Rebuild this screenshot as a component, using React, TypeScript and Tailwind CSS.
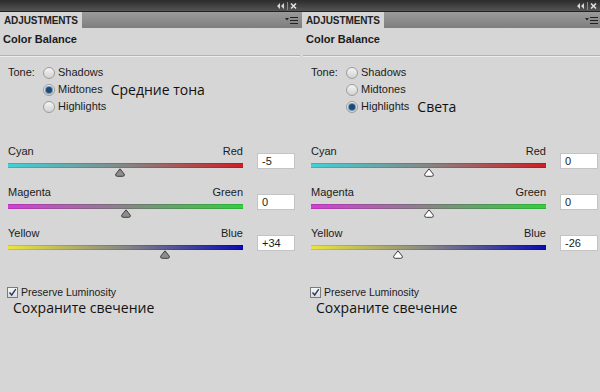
import React from 'react';

type Slider = { left: string; right: string; value: string; from: string; to: string; pos: number };

interface PanelProps {
  tone: 'Shadows' | 'Midtones' | 'Highlights';
  note: string;
  sliders: Slider[];
  filledThumbs: boolean;
  shift?: boolean;
}

const ui = { fontFamily: '"Liberation Sans", Arial, sans-serif' };
const ru = { fontFamily: '"Open Sans", "Noto Sans", sans-serif' };

const Radio = ({ on }: { on: boolean }) => (
  <span className="flex h-[12px] w-[12px] items-center justify-center rounded-full border border-[#9c9c9c] bg-gradient-to-b from-[#f4f4f4] to-[#d2d2d2]">
    {on && <span className="h-[6px] w-[6px] rounded-full bg-[#1d4a72] ring-1 ring-[#6f97bd]" />}
  </span>
);

const Thumb = ({ filled }: { filled: boolean }) => (
  <svg width="11" height="9" viewBox="0 0 11 9">
    <path
      d="M5.5 0.8 L9.8 6.2 Q10.3 8.3 8.2 8.3 L2.8 8.3 Q0.7 8.3 1.2 6.2 Z"
      fill={filled ? '#8d8d8d' : '#ffffff'}
      stroke="#3c3c3c"
      strokeWidth="1"
    />
  </svg>
);

const Panel: React.FC<PanelProps> = ({ tone, note, sliders, filledThumbs, shift }) => {
  return (
    <div className="flex w-[300px] flex-col bg-[#d6d6d6] text-[#1b1b1b]" style={ui}>
      {/* title bar */}
      <div className="flex h-[11px] items-center justify-end bg-gradient-to-b from-[#2c2c2c] to-[#555555] pr-[2px]">
        <svg width="22" height="8" viewBox="0 0 22 8">
          <path d="M4 1 L1 4 L4 7 Z M8 1 L5 4 L8 7 Z" fill="#d8d8d8" />
          <rect x="11" y="0" width="1" height="8" fill="#8a8a8a" />
          <path d="M15 1.5 L20 6.5 M20 1.5 L15 6.5" stroke="#e0e0e0" strokeWidth="1.6" />
        </svg>
      </div>
      {/* tab strip */}
      <div className={`flex h-[17px] items-stretch border-t border-[#222] bg-gradient-to-b from-[#9a9a9a] to-[#7e7e7e] ${shift ? 'pl-[2px]' : ''}`}>
        <div className="flex w-[82px] items-center overflow-hidden whitespace-nowrap bg-[#d6d6d6] pl-[4px] text-[10px] font-bold tracking-[-0.1px] text-[#222]">
          ADJUSTMENTS
        </div>
        <div className="ml-auto flex items-center pr-[2px]">
          <svg width="13" height="9" viewBox="0 0 13 9">
            <path d="M0 2 L4 2 L2 4.5 Z" fill="#222" />
            <path d="M5 1.5 H13 M5 4.5 H13 M5 7.5 H13" stroke="#222" strokeWidth="1" />
          </svg>
        </div>
      </div>
      <div className={`flex flex-col ${shift ? 'pl-[3px]' : ''}`}>
        {/* header */}
        <div className="h-[28px] border-b border-[#b2b2b2] pl-[3px] pt-[4px] text-[11px] font-bold leading-[14px]">
          Color Balance
        </div>
        <div className="h-px bg-[#ececec]" />

        {/* tone */}
        <div className="flex pl-[8px] pt-[7px]">
          <div className="w-[35px] pt-[1px] text-[11px] leading-[15px]">Tone:</div>
          <div className="flex flex-col">
            {(['Shadows', 'Midtones', 'Highlights'] as const).map((t) => (
              <div key={t} className="flex h-[17px] items-center">
                <Radio on={t === tone} />
                <span className="ml-[3px] text-[11px]">{t}</span>
                {t === tone && (
                  <span className="ml-[8px] text-[14px] leading-[17px] text-[#111]" style={ru}>
                    {note}
                  </span>
                )}
              </div>
            ))}
          </div>
        </div>

        {/* sliders */}
        <div className="mt-[29px] flex flex-col gap-[8px] pl-[8px]">
          {sliders.map((s) => (
            <div key={s.left} className="flex">
              <div className="flex w-[235px] flex-col">
                <div className="flex h-[14px] items-center justify-between text-[11px]">
                  <span>{s.left}</span>
                  <span>{s.right}</span>
                </div>
                <div className="relative mt-[5px]">
                  <div
                    className="h-[5px] w-full border-y border-[#00000022]"
                    style={{ background: `linear-gradient(to right, ${s.from}, #868686 50%, ${s.to})` }}
                  />
                  <div className="absolute top-[5px] -translate-x-1/2" style={{ left: `${s.pos}%` }}>
                    <Thumb filled={filledThumbs} />
                  </div>
                </div>
                <div className="h-[9px]" />
              </div>
              <div className="ml-[14px] mt-[9px] flex h-[16px] w-[38px] items-center border border-[#c4c4c4] bg-white pl-[4px] text-[11px]">
                {s.value}
              </div>
            </div>
          ))}
        </div>

        {/* preserve luminosity */}
        <div className="mt-[26px] flex items-center pl-[7px]">
          <span className="flex h-[11px] w-[11px] items-center justify-center border border-[#7b7b7b] bg-gradient-to-b from-[#f6f6f6] to-[#dcdcdc]">
            <svg width="9" height="9" viewBox="0 0 9 9">
              <path d="M1.5 4.5 L3.7 7 L7.8 1.2" fill="none" stroke="#253e63" strokeWidth="1.4" />
            </svg>
          </span>
          <span className="ml-[3px] text-[10.5px] leading-[14px]">Preserve Luminosity</span>
        </div>
        <div className="pl-[13px] text-[14px] leading-[18px] text-[#111]" style={ru}>
          Сохраните свечение
        </div>
      </div>
    </div>
  );
}

export default function App() {
  return (
    <div className="flex h-[392px] w-[600px] overflow-hidden bg-[#d6d6d6]">
      <Panel
        tone="Midtones"
        note="Средние тона"
        filledThumbs
        sliders={[
          { left: 'Cyan', right: 'Red', value: '-5', from: '#3fd2d8', to: '#d01e22', pos: 47.5 },
          { left: 'Magenta', right: 'Green', value: '0', from: '#d23ed4', to: '#32d03e', pos: 50 },
          { left: 'Yellow', right: 'Blue', value: '+34', from: '#ece43a', to: '#0a0ab4', pos: 67 },
        ]}
      />
      <Panel
        tone="Highlights"
        note="Света"
        filledThumbs={false}
        shift
        sliders={[
          { left: 'Cyan', right: 'Red', value: '0', from: '#3fd2d8', to: '#d01e22', pos: 50 },
          { left: 'Magenta', right: 'Green', value: '0', from: '#d23ed4', to: '#32d03e', pos: 50 },
          { left: 'Yellow', right: 'Blue', value: '-26', from: '#ece43a', to: '#0a0ab4', pos: 37 },
        ]}
      />
    </div>
  );
}
